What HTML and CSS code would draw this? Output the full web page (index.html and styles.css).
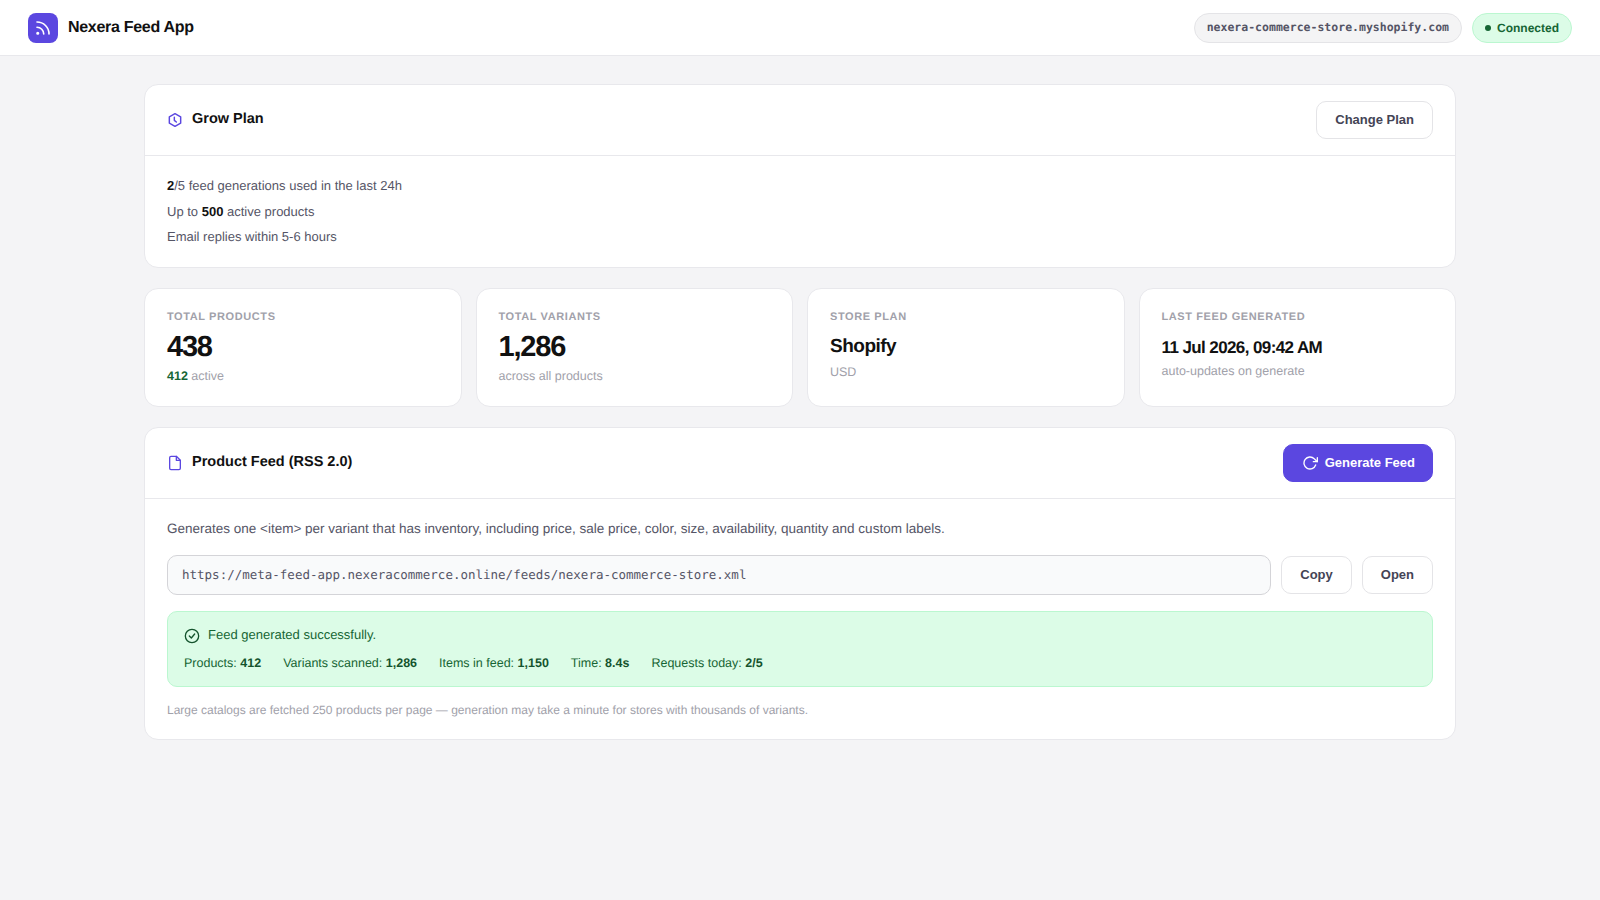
FILE: index.html
```html
<!DOCTYPE html>
<html lang="en">
<head>
    <meta charset="UTF-8">
    <meta name="viewport" content="width=device-width, initial-scale=1.0">
    <title>Nexera Feed App</title>
    <link rel="stylesheet" href="styles.css">
</head>
<body>

<header class="topbar">
    <div class="brand">
        <div class="brand-logo">
            <svg width="18" height="18" viewBox="0 0 24 24" fill="none" stroke="#fff" stroke-width="2.2" stroke-linecap="round" stroke-linejoin="round">
                <path d="M4 11a9 9 0 0 1 9 9"/>
                <path d="M4 4a16 16 0 0 1 16 16"/>
                <circle cx="5" cy="19" r="1"/>
            </svg>
        </div>
        <span class="brand-name">Nexera Feed App</span>
    </div>
    <div class="topbar-right">
        <span class="store-pill">nexera-commerce-store.myshopify.com</span>
        <span class="status-pill"><span class="status-dot"></span>Connected</span>
    </div>
</header>

<main class="container">
    <section class="card">
        <div class="card-header">
            <h2 class="card-title">
                <svg class="card-icon" width="16" height="16" viewBox="0 0 24 24" fill="none" stroke="#5b47e0" stroke-width="2.2" stroke-linecap="round" stroke-linejoin="round">
                    <path d="M12 2.5l8.5 4.8v9.4L12 21.5l-8.5-4.8V7.3z"/>
                    <path d="M11 8v4.5l3 2.5"/>
                </svg>
                Grow Plan
            </h2>
            <button class="btn">Change Plan</button>
        </div>
        <div class="card-body plan-body">
            <p><strong>2</strong>/5 feed generations used in the last 24h</p>
            <p>Up to <strong>500</strong> active products</p>
            <p>Email replies within 5-6 hours</p>
        </div>
    </section>

    <section class="stats">
        <div class="stat-card">
            <div class="stat-label">Total Products</div>
            <div class="stat-value">438</div>
            <div class="stat-sub"><span class="stat-active">412</span> active</div>
        </div>
        <div class="stat-card">
            <div class="stat-label">Total Variants</div>
            <div class="stat-value">1,286</div>
            <div class="stat-sub">across all products</div>
        </div>
        <div class="stat-card">
            <div class="stat-label">Store Plan</div>
            <div class="stat-value stat-value-md">Shopify</div>
            <div class="stat-sub stat-sub-md">USD</div>
        </div>
        <div class="stat-card">
            <div class="stat-label">Last Feed Generated</div>
            <div class="stat-value stat-value-sm">11 Jul 2026, 09:42 AM</div>
            <div class="stat-sub stat-sub-sm">auto-updates on generate</div>
        </div>
    </section>

    <section class="card">
        <div class="card-header">
            <h2 class="card-title">
                <svg class="card-icon" width="16" height="16" viewBox="0 0 24 24" fill="none" stroke="#5b47e0" stroke-width="2" stroke-linecap="round" stroke-linejoin="round">
                    <path d="M14 2H6a2 2 0 0 0-2 2v16a2 2 0 0 0 2 2h12a2 2 0 0 0 2-2V8z"/>
                    <path d="M14 2v6h6"/>
                </svg>
                Product Feed (RSS 2.0)
            </h2>
            <button class="btn btn-primary">
                <svg width="16" height="16" viewBox="0 0 24 24" fill="none" stroke="#fff" stroke-width="2" stroke-linecap="round" stroke-linejoin="round">
                    <path d="M23 4v6h-6"/>
                    <path d="M20.49 15a9 9 0 1 1-2.12-9.36L23 10"/>
                </svg>
                Generate Feed
            </button>
        </div>
        <div class="card-body">
            <p class="feed-desc">Generates one &lt;item&gt; per variant that has inventory, including price, sale price, color, size, availability, quantity and custom labels.</p>
            <div class="url-row">
                <div class="url-box">https://meta-feed-app.nexeracommerce.online/feeds/nexera-commerce-store.xml</div>
                <button class="btn">Copy</button>
                <button class="btn">Open</button>
            </div>
            <div class="success-box">
                <div class="success-title">
                    <svg class="success-icon" width="16" height="16" viewBox="0 0 24 24" fill="none" stroke="#14532d" stroke-width="2" stroke-linecap="round" stroke-linejoin="round">
                        <circle cx="12" cy="12" r="10"/>
                        <path d="M8 12l3 3 5-6"/>
                    </svg>
                    <span class="success-text">Feed generated successfully.</span>
                </div>
                <div class="success-stats">
                    <span>Products: <strong>412</strong></span>
                    <span>Variants scanned: <strong>1,286</strong></span>
                    <span>Items in feed: <strong>1,150</strong></span>
                    <span>Time: <strong>8.4s</strong></span>
                    <span>Requests today: <strong>2/5</strong></span>
                </div>
            </div>
            <p class="feed-note">Large catalogs are fetched 250 products per page — generation may take a minute for stores with thousands of variants.</p>
        </div>
    </section>
</main>

</body>
</html>
```

FILE: styles.css
```css
* {
    box-sizing: border-box;
}

body {
    font-family: 'Liberation Sans', Arial, sans-serif;
    background-color: #f4f4f6;
    color: #111111;
    margin: 0;
    text-rendering: geometricPrecision;
}

.topbar {
    height: 56px;
    padding: 0 28px;
    background: #ffffff;
    border-bottom: 1px solid #e8e8ec;
    display: flex;
    align-items: center;
    justify-content: space-between;
}

.brand {
    display: flex;
    align-items: center;
    gap: 10px;
}

.brand-logo {
    width: 30px;
    height: 30px;
    border-radius: 8px;
    background: #5b47e0;
    display: flex;
    align-items: center;
    justify-content: center;
}

.brand-name {
    font-size: 16px;
    font-weight: 700;
    letter-spacing: -0.3px;
}

.topbar-right {
    display: flex;
    align-items: center;
    gap: 10px;
}

.store-pill {
    font-family: 'DejaVu Sans Mono', monospace;
    font-size: 11.5px;
    font-weight: 700;
    line-height: 14px;
    color: #555566;
    background: #f4f4f5;
    border: 1px solid #e4e4e7;
    border-radius: 999px;
    padding: 6px 12px 8px;
}

.status-pill {
    display: flex;
    align-items: center;
    gap: 6px;
    height: 30px;
    font-size: 12px;
    font-weight: 700;
    color: #166534;
    background: #dcfce7;
    border: 1px solid #bbf7d0;
    border-radius: 999px;
    padding: 0 12px;
}

.status-dot {
    width: 6px;
    height: 6px;
    border-radius: 50%;
    background: #166534;
}

.container {
    max-width: 1312px;
    margin: 0 auto;
    padding-top: 28px;
}

.card {
    background: #ffffff;
    border: 1px solid #e8e8ec;
    border-radius: 14px;
    margin-bottom: 20px;
}

.card-header {
    height: 71px;
    padding: 0 22px;
    border-bottom: 1px solid #e8e8ec;
    display: flex;
    align-items: center;
    justify-content: space-between;
}

.card-title {
    display: flex;
    align-items: flex-start;
    gap: 9px;
    margin: 0;
    padding-bottom: 1px;
    font-size: 14.5px;
    line-height: 17px;
    font-weight: 700;
}

.card-icon {
    margin-top: 1px;
}

.card-body {
    padding: 22px;
    font-size: 13.5px;
    color: #555566;
}

.card-body p {
    margin: 0;
}

.plan-body {
    padding: 17px 22px 17.5px;
    font-size: 13px;
    line-height: 25.5px;
}

.plan-body strong {
    color: #111111;
}

.btn {
    font-family: inherit;
    font-size: 13px;
    font-weight: 700;
    color: #444455;
    background: #ffffff;
    border: 1px solid #e4e4e7;
    border-radius: 10px;
    height: 38px;
    padding: 0 18px 1px;
    display: flex;
    align-items: center;
    gap: 8px;
}

.btn-primary {
    color: #ffffff;
    background: #5b47e0;
    border-color: #5b47e0;
    padding-right: 17px;
    gap: 7px;
}

.stats {
    display: grid;
    grid-template-columns: repeat(4, 1fr);
    gap: 14px;
    margin-bottom: 20px;
}

.stat-card {
    height: 119px;
    padding: 22px 22px 20px;
    background: #ffffff;
    border: 1px solid #e8e8ec;
    border-radius: 14px;
}

.stat-label {
    font-size: 11px;
    font-weight: 700;
    letter-spacing: 0.6px;
    text-transform: uppercase;
    color: #a1a1aa;
}

.stat-value {
    font-size: 29px;
    font-weight: 700;
    letter-spacing: -1.2px;
    margin-top: 8px;
}

.stat-value-md {
    font-size: 19px;
    letter-spacing: -0.5px;
    margin-top: 13px;
}

.stat-value-sm {
    font-size: 17px;
    letter-spacing: -0.6px;
    margin-top: 15px;
}

.stat-sub {
    font-size: 12.5px;
    color: #a1a1aa;
    margin-top: 5px;
}

.stat-sub-md {
    margin-top: 7px;
}

.stat-sub-sm {
    margin-top: 6px;
}

.stat-active {
    font-weight: 700;
    color: #166534;
}

.feed-desc {
    line-height: 16px;
}

.card-body .feed-desc {
    margin-bottom: 18px;
}

.url-row {
    display: flex;
    align-items: center;
    gap: 10px;
    margin-bottom: 16px;
}

.url-box {
    flex: 1;
    height: 40px;
    padding: 0 14px 2px;
    display: flex;
    align-items: center;
    font-family: 'DejaVu Sans Mono', monospace;
    font-size: 12.5px;
    color: #555566;
    background: #f9fafb;
    border: 1px solid #d4d4d8;
    border-radius: 10px;
}

.success-box {
    padding: 15px 16px;
    height: 76px;
    font-size: 13px;
    background: #dcfce7;
    border: 1px solid #bbf7d0;
    border-radius: 10px;
    color: #166534;
}

.success-title {
    display: flex;
    align-items: flex-start;
    gap: 8px;
    line-height: 15px;
}

.success-icon {
    margin-top: 1px;
}

.success-stats {
    display: flex;
    gap: 22px;
    margin-top: 12px;
    font-size: 12.5px;
}

.success-stats strong {
    color: #14532d;
}

.feed-note {
    font-size: 12px;
    color: #a1a1aa;
    margin-top: 16px !important;
}
```
